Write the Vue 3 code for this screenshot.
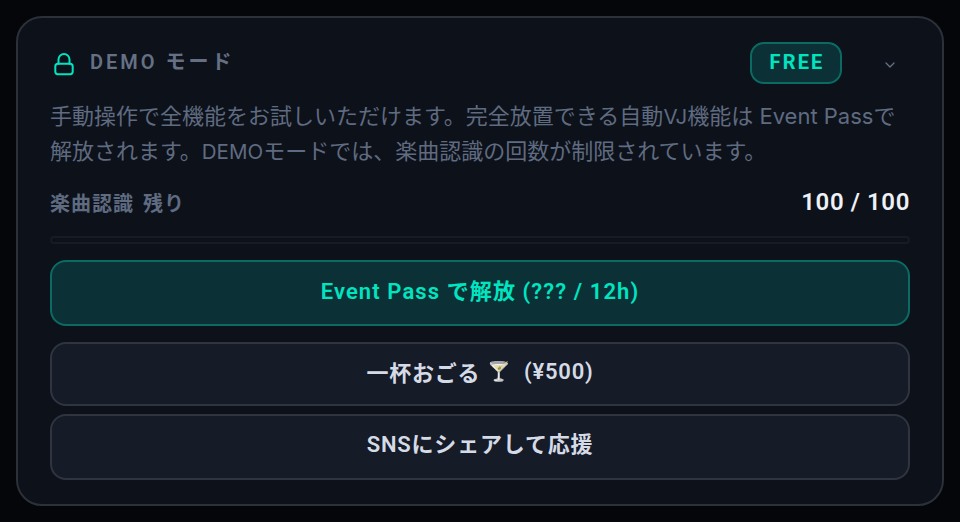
<script setup>
const used = 100
const total = 100
</script>

<template>
  <div class="page">
    <section class="card">
      <header class="head">
        <div class="title">
          <svg class="lock" viewBox="0 0 24 24" fill="none" stroke="currentColor" stroke-width="2" stroke-linecap="round" stroke-linejoin="round">
            <rect x="3.3" y="11.8" width="17.4" height="10.4" rx="2.6" />
            <path d="M6.5 11.8V7.5a5.5 5.5 0 0 1 11 0v4.3" />
          </svg>
          <span class="title-text">DEMO モード</span>
        </div>
        <div class="head-right">
          <span class="badge">FREE</span>
          <svg class="chev" viewBox="0 0 12 12" fill="none" stroke="currentColor" stroke-width="1.3" stroke-linecap="round" stroke-linejoin="round">
            <path d="M2 4l4 4 4-4" />
          </svg>
        </div>
      </header>
      <p class="desc">手動操作で全機能をお試しいただけます。完全放置できる自動<span class="small">VJ</span>機能は Event Passで<br />解放されます。<span class="small">DEMO</span>モードでは、楽曲認識の回数が制限されています。</p>
      <div class="meter">
        <span class="meter-label">楽曲認識 残り</span>
        <span class="meter-value">{{ used }} / {{ total }}</span>
      </div>
      <div class="track"></div>
      <button class="btn primary">Event Pass で解放 (??? / 12h)</button>
      <button class="btn second">一杯おごる <span class="emoji">🍸</span>&nbsp; (¥500)</button>
      <button class="btn third">SNSにシェアして応援</button>
    </section>
  </div>
</template>

<style>
html, body { margin: 0; background: #050608; }
</style>

<style scoped>
.page {
  width: 960px;
  height: 522px;
  box-sizing: border-box;
  padding: 16px;
  background: #050609;
  font-family: "Roboto", "Noto Sans CJK JP", sans-serif;
}
.card {
  box-sizing: border-box;
  height: 490px;
  padding: 24px 32px 24px;
  border: 2px solid #2c3039;
  border-radius: 26px;
  background: #0d111a;
  display: flex;
  flex-direction: column;
}
.head {
  display: flex;
  justify-content: space-between;
  align-items: center;
  height: 42px;
}
.title { display: flex; align-items: center; gap: 14px; }
.lock { width: 24px; height: 24px; margin-left: 2px; margin-top: 2px; color: #00e5c0; }
.title-text {
  font-size: 20px;
  font-weight: 600;
  letter-spacing: 3px;
  color: #667085;
  margin-top: -6px;
}
.head-right { display: flex; align-items: center; gap: 42px; padding-right: 14px; }
.badge {
  box-sizing: border-box;
  width: 92px;
  height: 42px;
  padding: 0 0 2px 2px;
  display: flex;
  align-items: center;
  justify-content: center;
  border: 2px solid #0b6b62;
  border-radius: 14px;
  background: #0b3137;
  color: #00e5c0;
  font-size: 20px;
  font-weight: 700;
  letter-spacing: 2.2px;
}
.chev { width: 12px; height: 12px; color: #667085; margin-top: 3px; }
.desc {
  margin: 15px 0 0;
  font-family: "Inter", "Noto Sans CJK JP", sans-serif;
  font-size: 22px;
  line-height: 35px;
  color: #5f6b80;
}
.small { font-size: 20.5px; }
.meter {
  margin-top: 15px;
  display: flex;
  justify-content: space-between;
  align-items: center;
  height: 36px;
}
.meter-label { font-size: 20px; font-weight: 600; color: #5f6b80; letter-spacing: 1px; word-spacing: 3px; }
.meter-value { font-size: 24px; font-weight: 600; color: #eef1f6; letter-spacing: 0.6px; }
.track {
  box-sizing: border-box;
  height: 8px;
  margin-top: 16px;
  border: 2px solid #171b24;
  border-radius: 4px;
}
.btn {
  box-sizing: border-box;
  display: flex;
  align-items: center;
  justify-content: center;
  width: 100%;
  padding: 0;
  border-radius: 16px;
  font-family: inherit;
  font-size: 22px;
  font-weight: 600;
  letter-spacing: 0.8px;
  white-space: pre;
}
.emoji { font-size: 19px; }
.primary {
  height: 66px;
  margin-top: 16px;
  padding-bottom: 9px;
  border: 2px solid #0b6b62;
  background: #0b3137;
  color: #00e5c0;
  letter-spacing: 1.1px;
}
.second, .third {
  border: 2px solid #2f343f;
  background: #151b27;
  color: #d5dbe6;
}
.second { height: 64px; margin-top: 16px; padding-bottom: 6px; }
.third { height: 66px; margin-top: 8px; padding-bottom: 11px; }
</style>
